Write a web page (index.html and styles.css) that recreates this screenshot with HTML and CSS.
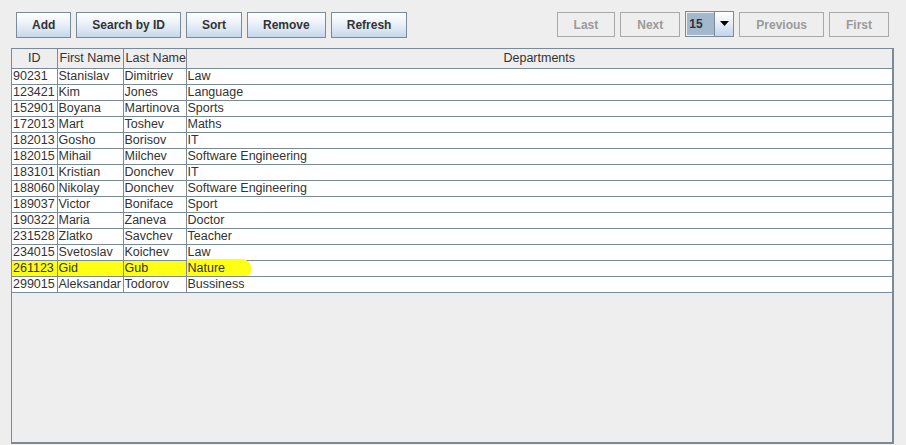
FILE: index.html
```html
<!DOCTYPE html>
<html>
<head>
<meta charset="utf-8">
<link rel="stylesheet" href="styles.css">
</head>
<body>
<div class="frame">
  <div class="toolbar">
    <div class="group">
      <button class="btn">Add</button>
      <button class="btn">Search by ID</button>
      <button class="btn">Sort</button>
      <button class="btn">Remove</button>
      <button class="btn">Refresh</button>
    </div>
    <div class="group right">
      <button class="btn disabled">Last</button>
      <button class="btn disabled">Next</button>
      <div class="combo"><span class="combo-value">15</span><span class="combo-arrow"><svg width="9" height="5" viewBox="0 0 9 5"><path d="M0 0H9L4.5 5Z" fill="#000"/></svg></span></div>
      <button class="btn disabled">Previous</button>
      <button class="btn disabled">First</button>
    </div>
  </div>
  <div class="pane">
    <table class="grid">
      <colgroup><col class="c-id"><col class="c-first"><col class="c-last"><col></colgroup>
      <thead>
        <tr><th class="center">ID</th><th>First Name</th><th>Last Name</th><th class="center">Departments</th></tr>
      </thead>
      <tbody>
        <tr><td>90231</td><td>Stanislav</td><td>Dimitriev</td><td>Law</td></tr>
        <tr><td>123421</td><td>Kim</td><td>Jones</td><td>Language</td></tr>
        <tr><td>152901</td><td>Boyana</td><td>Martinova</td><td>Sports</td></tr>
        <tr><td>172013</td><td>Mart</td><td>Toshev</td><td>Maths</td></tr>
        <tr><td>182013</td><td>Gosho</td><td>Borisov</td><td>IT</td></tr>
        <tr><td>182015</td><td>Mihail</td><td>Milchev</td><td>Software Engineering</td></tr>
        <tr><td>183101</td><td>Kristian</td><td>Donchev</td><td>IT</td></tr>
        <tr><td>188060</td><td>Nikolay</td><td>Donchev</td><td>Software Engineering</td></tr>
        <tr><td>189037</td><td>Victor</td><td>Boniface</td><td>Sport</td></tr>
        <tr><td>190322</td><td>Maria</td><td>Zaneva</td><td>Doctor</td></tr>
        <tr><td>231528</td><td>Zlatko</td><td>Savchev</td><td>Teacher</td></tr>
        <tr><td>234015</td><td>Svetoslav</td><td>Koichev</td><td>Law</td></tr>
        <tr class="marked"><td>261123</td><td>Gid</td><td>Gub</td><td class="mark-cell"><span class="mark">Nature</span></td></tr>
        <tr><td>299015</td><td>Aleksandar</td><td>Todorov</td><td>Bussiness</td></tr>
      </tbody>
    </table>
  </div>
</div>
</body>
</html>
```
FILE: styles.css
```css
html, body {
  margin: 0;
  padding: 0;
  background: #eeeeee;
}
body {
  font-family: "Liberation Sans", Arial, sans-serif;
  color: #333333;
  width: 906px;
  height: 445px;
  overflow: hidden;
}
.frame {
  display: flex;
  flex-direction: column;
  height: 445px;
}
.toolbar {
  display: flex;
  align-items: flex-start;
  padding: 12px 17px 0 16px;
  height: 48px;
  flex: none;
  box-sizing: border-box;
}
.group {
  display: flex;
  gap: 5px;
  align-items: flex-start;
}
.group.right {
  margin-left: auto;
  gap: 5px;
}
.btn {
  font-family: "Liberation Sans", Arial, sans-serif;
  font-weight: bold;
  font-size: 12px;
  color: #333333;
  height: 26px;
  padding: 0 15px;
  margin: 0;
  border: 1px solid #7a8a99;
  border-radius: 0;
  background: linear-gradient(to bottom, #ffffff 0%, #f2f6fb 30%, #dbe6f2 70%, #c4d6ea 100%);
  line-height: 24px;
}
.btn.disabled {
  background: #eeeeee;
  border-color: #a8a8a8;
  color: #9a9a9a;
  height: 25px;
}
.group.right .btn {
  padding: 0 16px;
}
.combo {
  display: flex;
  height: 26px;
  margin-top: -1px;
  border: 1px solid #7a8a99;
  box-sizing: border-box;
  width: 49px;
}
.combo-value {
  flex: 1;
  background: #a3b8cc;
  font-weight: bold;
  font-size: 12px;
  color: #333333;
  padding: 4px 0 0 2px;
  line-height: 14px;
  border: 1px solid #eeeeee;
  border-right: none;
}
.combo-arrow {
  width: 19px;
  border-left: 1px solid #7a8a99;
  background: linear-gradient(to bottom, #ffffff 0%, #eef3f9 35%, #d2e0ee 75%, #c4d6ea 100%);
  display: flex;
  align-items: center;
  justify-content: center;
  padding-bottom: 1px;
  box-sizing: border-box;
}
.pane {
  margin: 0 12px 1px 11px;
  flex: 1;
  border: 1px solid #7a8a99;
  border-right-width: 2px;
  border-bottom-width: 2px;
  background: #eeeeee;
}
.grid {
  width: 100%;
  border-collapse: collapse;
  table-layout: fixed;
  font-size: 12.5px;
}
.c-id { width: 45px; }
.c-first { width: 66px; }
.c-last { width: 63px; }
.grid th {
  background: #eeeeee;
  font-weight: normal;
  color: #333333;
  height: 19px;
  padding: 0 0 0 2px;
  text-align: left;
  border-right: 1px solid #7a8a99;
  border-bottom: 1px solid #7a8a99;
  white-space: nowrap;
  overflow: hidden;
  line-height: 19px;
}
.grid th.center {
  text-align: center;
  padding: 0;
}
.grid th:last-child,
.grid td:last-child {
  border-right: none;
}
.grid td {
  background: #ffffff;
  height: 15px;
  padding: 0 0 0 1px;
  line-height: 15px;
  border-right: 1px solid #7a8a99;
  border-bottom: 1px solid #7a8a99;
  white-space: nowrap;
  overflow: hidden;
  color: #333333;
}
.grid tr.marked td {
  background: #ffff14;
}
.grid tr.marked td.mark-cell {
  background: #ffffff;
  overflow: visible;
}
.mark {
  display: inline-block;
  background: #ffff14;
  margin-left: -1px;
  padding: 0 26px 0 1px;
  height: 17px;
  margin-top: -2px;
  line-height: 19px;
  vertical-align: top;
  border-radius: 0 9px 5px 0;
}
```
